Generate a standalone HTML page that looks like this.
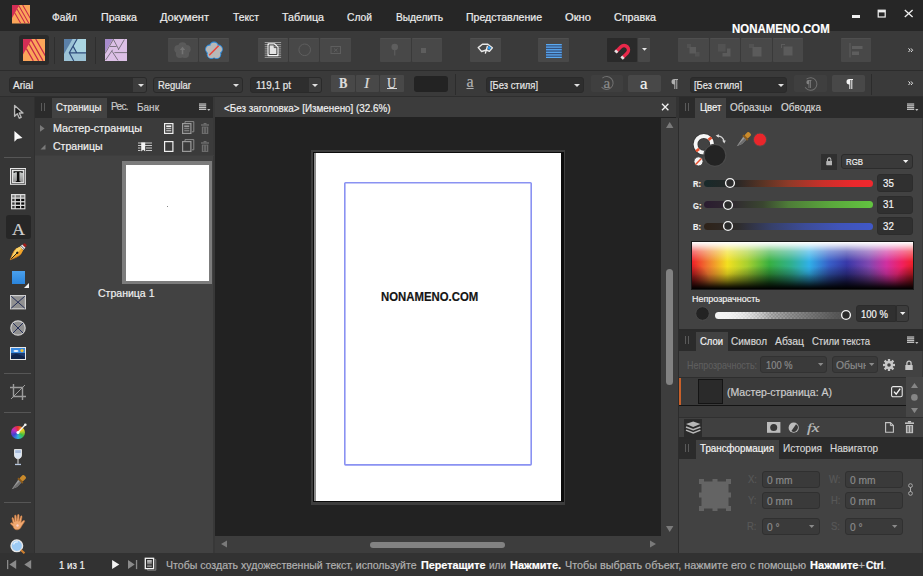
<!DOCTYPE html>
<html><head><meta charset="utf-8"><title>Affinity Publisher</title>
<style>
html,body{margin:0;padding:0;}
body{width:923px;height:576px;overflow:hidden;background:#3a3a3a;position:relative;font-family:"Liberation Sans",sans-serif;}
#r{position:absolute;left:0;top:0;width:923px;height:576px;overflow:hidden;}
#r div,#r svg{position:absolute;box-sizing:border-box;}
#r .t{white-space:nowrap;-webkit-text-stroke:0.2px;font-family:"Liberation Sans",sans-serif;}
#r .s{font-family:"Liberation Serif",serif;}
</style></head><body><div id="r">
<div style="left:0px;top:0px;width:923px;height:31px;background:#262626;"></div>
<div style="left:0px;top:31px;width:923px;height:40px;background:#3a3a3a;"></div>
<div style="left:0px;top:70px;width:923px;height:1px;background:#2c2c2c;"></div>
<div style="left:0px;top:71px;width:923px;height:26px;background:#3a3a3a;"></div>
<div style="left:0px;top:96px;width:923px;height:1px;background:#2e2e2e;"></div>
<div style="left:0px;top:97px;width:35px;height:456px;background:#363636;"></div>
<div style="left:34px;top:97px;width:1px;height:456px;background:#303030;"></div>
<div style="left:35px;top:97px;width:179px;height:456px;background:#424242;"></div>
<div style="left:35px;top:97px;width:179px;height:21px;background:#2b2b2b;"></div>
<div style="left:52px;top:98px;width:55px;height:20px;background:#424242;"></div>
<div style="left:35px;top:118px;width:179px;height:37px;background:#3b3b3b;"></div>
<div style="left:213px;top:97px;width:2px;height:456px;background:#383838;"></div>
<div style="left:215px;top:97px;width:463px;height:456px;background:#222222;"></div>
<div style="left:215px;top:97px;width:461px;height:20px;background:#3c3c3c;"></div>
<div style="left:676px;top:97px;width:3px;height:21px;background:#333333;"></div>
<div style="left:661px;top:118px;width:17px;height:418px;background:#3d3d3d;"></div>
<div style="left:215px;top:536px;width:463px;height:17px;background:#3d3d3d;"></div>
<div style="left:677.5px;top:118px;width:1.5px;height:435px;background:#2c2c2c;"></div>
<div style="left:679px;top:97px;width:244px;height:456px;background:#424242;"></div>
<div style="left:922px;top:97px;width:1px;height:456px;background:#383838;"></div>
<div style="left:0px;top:553px;width:923px;height:23px;background:#323232;"></div>
<div class="t" style="left:52px;top:9.9px;height:15px;line-height:15px;font-size:11px;color:#ececec;transform-origin:0 0;transform:scaleX(0.9245);">Файл</div>
<div class="t" style="left:101px;top:9.9px;height:15px;line-height:15px;font-size:11px;color:#ececec;transform-origin:0 0;transform:scaleX(0.9689);">Правка</div>
<div class="t" style="left:160px;top:9.9px;height:15px;line-height:15px;font-size:11px;color:#ececec;transform-origin:0 0;transform:scaleX(1.0042);">Документ</div>
<div class="t" style="left:233px;top:9.9px;height:15px;line-height:15px;font-size:11px;color:#ececec;transform-origin:0 0;transform:scaleX(0.9389);">Текст</div>
<div class="t" style="left:282px;top:9.9px;height:15px;line-height:15px;font-size:11px;color:#ececec;transform-origin:0 0;transform:scaleX(0.9738);">Таблица</div>
<div class="t" style="left:347px;top:9.9px;height:15px;line-height:15px;font-size:11px;color:#ececec;transform-origin:0 0;transform:scaleX(0.9347);">Слой</div>
<div class="t" style="left:396px;top:9.9px;height:15px;line-height:15px;font-size:11px;color:#ececec;transform-origin:0 0;transform:scaleX(0.9262);">Выделить</div>
<div class="t" style="left:466px;top:9.9px;height:15px;line-height:15px;font-size:11px;color:#ececec;transform-origin:0 0;transform:scaleX(0.9583);">Представление</div>
<div class="t" style="left:565px;top:9.9px;height:15px;line-height:15px;font-size:11px;color:#ececec;transform-origin:0 0;transform:scaleX(1.0172);">Окно</div>
<div class="t" style="left:614px;top:9.9px;height:15px;line-height:15px;font-size:11px;color:#ececec;transform-origin:0 0;transform:scaleX(0.9733);">Справка</div>
<svg style="left:11.6px;top:5px;" width="18.5" height="18.5" viewBox="0 0 22 22"><rect width="22" height="22" fill="#fba55a"/><path d="M0 0H8.75L0 15.5Z" fill="#d42e55"/><path d="M12.7 0L22.4 17M8.1 0.9L20 21.8M5.95 4.9L15.6 21.8M3.3 9.6L10.3 21.8" stroke="#c8284a" stroke-width="1.2" fill="none"/></svg>
<div style="left:852px;top:15px;width:8px;height:3.4px;background:#f0f0f0;"></div>
<svg style="left:877px;top:9.4px;" width="10" height="10" viewBox="0 0 10 10"><rect x="1.2" y="1.2" width="7" height="6.8" fill="none" stroke="#f0f0f0" stroke-width="1.2"/><rect x="1.2" y="1.2" width="7" height="2.2" fill="#f0f0f0"/></svg>
<svg style="left:904px;top:9.4px;" width="10" height="9" viewBox="0 0 10 9"><path d="M0.8 0.9L8.6 7.9M8.6 0.9L0.8 7.9" stroke="#f0f0f0" stroke-width="1.3" fill="none"/></svg>
<div style="left:19px;top:35px;width:30px;height:30px;background:#2a2a2a;border-radius:3px;"></div>
<svg style="left:23px;top:39px;" width="22" height="22" viewBox="0 0 22 22"><rect width="22" height="22" fill="#fba55a"/><path d="M0 0H8.75L0 15.5Z" fill="#d42e55"/><path d="M12.7 0L22.4 17M8.1 0.9L20 21.8M5.95 4.9L15.6 21.8M3.3 9.6L10.3 21.8" stroke="#c8284a" stroke-width="1.2" fill="none"/></svg>
<div style="left:54px;top:37px;width:1px;height:27px;background:#2e2e2e;"></div>
<div style="left:95px;top:37px;width:1px;height:27px;background:#2e2e2e;"></div>
<svg style="left:64px;top:39px;" width="22" height="22" viewBox="0 0 22 22"><rect width="22" height="22" fill="#9cc3d6"/><path d="M13.1 0H22V13.8H12.7L9.2 7.6Z" fill="#abd6e2"/><path d="M0 0H8.5L0 15Z" fill="#5b80a8"/><path d="M13.1 0L5.3 13.8L9.8 22M5.3 13.8H22M9.2 7.4L12.7 13.8" stroke="#2f4c7c" stroke-width="1.15" fill="none"/></svg>
<svg style="left:104.5px;top:39px;" width="22" height="22" viewBox="0 0 22 22"><rect width="22" height="22" fill="#dcc0e6"/><path d="M0 0H7.8L0 13.4Z" fill="#a88ccc"/><path d="M8.2 0L13.6 10.2M19.4 0.5L13.2 11M8.6 0L0 14.6M5 7.5H11.6M9.4 13.6H22M7.6 10.8L0.6 21M7 12.2L13 21.4" stroke="#77707c" stroke-width="0.95" fill="none"/></svg>
<div style="left:168px;top:38px;width:30px;height:24px;background:#484848;border-radius:1px;border-top:1px solid #4f4f4f;"></div>
<div style="left:199px;top:38px;width:30px;height:24px;background:#484848;border-radius:1px;border-top:1px solid #4f4f4f;"></div>
<div style="left:258px;top:38px;width:30px;height:24px;background:#484848;border-radius:1px;border-top:1px solid #4f4f4f;"></div>
<div style="left:289px;top:38px;width:30px;height:24px;background:#484848;border-radius:1px;border-top:1px solid #4f4f4f;"></div>
<div style="left:320px;top:38px;width:31px;height:24px;background:#484848;border-radius:1px;border-top:1px solid #4f4f4f;"></div>
<div style="left:380px;top:38px;width:31px;height:24px;background:#484848;border-radius:1px;border-top:1px solid #4f4f4f;"></div>
<div style="left:412px;top:38px;width:30px;height:24px;background:#484848;border-radius:1px;border-top:1px solid #4f4f4f;"></div>
<div style="left:470px;top:38px;width:31px;height:24px;background:#484848;border-radius:1px;border-top:1px solid #4f4f4f;"></div>
<div style="left:538px;top:38px;width:31px;height:24px;background:#484848;border-radius:1px;border-top:1px solid #4f4f4f;"></div>
<div style="left:841px;top:38px;width:30px;height:24px;background:#484848;border-radius:1px;border-top:1px solid #4f4f4f;"></div>
<div style="left:678px;top:38px;width:31px;height:24px;background:#484848;border-radius:1px;border-top:1px solid #4f4f4f;"></div>
<div style="left:710px;top:38px;width:30px;height:24px;background:#484848;border-radius:1px;border-top:1px solid #4f4f4f;"></div>
<div style="left:741px;top:38px;width:31px;height:24px;background:#484848;border-radius:1px;border-top:1px solid #4f4f4f;"></div>
<div style="left:773px;top:38px;width:30px;height:24px;background:#484848;border-radius:1px;border-top:1px solid #4f4f4f;"></div>
<div style="left:607px;top:38px;width:30px;height:24px;background:#2a2a2a;border-radius:1px;"></div>
<div style="left:638px;top:38px;width:12px;height:24px;background:#484848;border-radius:1px;border-top:1px solid #4f4f4f;"></div>
<svg style="left:642px;top:48px;" width="5" height="3" viewBox="0 0 5 3"><path d="M0 0H5L2.5 2.8Z" fill="#e8e8e8"/></svg>
<div class="t" style="left:732.4px;top:21px;height:16px;line-height:16px;font-size:13.2px;color:#ffffff;font-weight:700;transform-origin:0 0;transform:scaleX(0.8660);">NONAMENO.COM</div>
<svg style="left:908px;top:48px;" width="6" height="5" viewBox="0 0 6 5"><path d="M0.5 0.4L2.1 2.2L0.5 4M3 0.4L4.6 2.2L3 4" stroke="#e6e6e6" stroke-width="1" fill="none"/></svg>
<svg style="left:908px;top:81px;" width="6" height="5" viewBox="0 0 6 5"><path d="M0.5 0.4L2.1 2.2L0.5 4M3 0.4L4.6 2.2L3 4" stroke="#e6e6e6" stroke-width="1" fill="none"/></svg>
<svg style="left:172.3px;top:40.2px;" width="21" height="21" viewBox="0 0 21 21"><circle cx="10.50" cy="6.24" r="4.10" fill="#5a5a5a"/><circle cx="14.56" cy="9.18" r="4.10" fill="#5a5a5a"/><circle cx="13.01" cy="13.95" r="4.10" fill="#5a5a5a"/><circle cx="7.99" cy="13.95" r="4.10" fill="#5a5a5a"/><circle cx="6.44" cy="9.18" r="4.10" fill="#5a5a5a"/><circle cx="10.5" cy="10.5" r="5.08" fill="#5a5a5a"/><path d="M10.5 6.8L7.8 10H9.7V14.2H11.3V10H13.2Z" fill="#747474"/></svg>
<svg style="left:203.3px;top:40.2px;" width="22" height="22" viewBox="0 0 22 22"><circle cx="11.00" cy="6.33" r="4.20" fill="#b8b8b8" stroke="#2e8fe2" stroke-width="1.1"/><circle cx="15.15" cy="9.35" r="4.20" fill="#b8b8b8" stroke="#2e8fe2" stroke-width="1.1"/><circle cx="13.57" cy="14.23" r="4.20" fill="#b8b8b8" stroke="#2e8fe2" stroke-width="1.1"/><circle cx="8.43" cy="14.23" r="4.20" fill="#b8b8b8" stroke="#2e8fe2" stroke-width="1.1"/><circle cx="6.85" cy="9.35" r="4.20" fill="#b8b8b8" stroke="#2e8fe2" stroke-width="1.1"/><circle cx="11" cy="10.7" r="5.21" fill="#b8b8b8"/><circle cx="11.00" cy="6.33" r="3.65" fill="#b8b8b8"/><circle cx="15.15" cy="9.35" r="3.65" fill="#b8b8b8"/><circle cx="13.57" cy="14.23" r="3.65" fill="#b8b8b8"/><circle cx="8.43" cy="14.23" r="3.65" fill="#b8b8b8"/><circle cx="6.85" cy="9.35" r="3.65" fill="#b8b8b8"/><path d="M6.2 15.2L15.6 5.8" stroke="#e8453c" stroke-width="1.5"/></svg>
<svg style="left:264px;top:42px;" width="18" height="16" viewBox="0 0 18 16"><rect x="0.7" y="0.10" width="16.4" height="0.9" fill="#a6a6a6"/><rect x="0.7" y="2.21" width="16.4" height="0.9" fill="#a6a6a6"/><rect x="0.7" y="4.32" width="16.4" height="0.9" fill="#a6a6a6"/><rect x="0.7" y="6.43" width="16.4" height="0.9" fill="#a6a6a6"/><rect x="0.7" y="8.54" width="16.4" height="0.9" fill="#a6a6a6"/><rect x="0.7" y="10.65" width="16.4" height="0.9" fill="#a6a6a6"/><rect x="0.7" y="12.76" width="16.4" height="0.9" fill="#a6a6a6"/><rect x="0.7" y="14.87" width="16.4" height="0.9" fill="#a6a6a6"/><path d="M4.2 2H10.6L13.8 5.2V13.4H4.2Z" fill="#e4e4e4" stroke="#f6f6f6" stroke-width="1.5" stroke-linejoin="round"/><path d="M5.1 2.9H10.3L12.9 5.5V12.5H5.1Z" fill="#e2e2e2" stroke="#2c2c2c" stroke-width="0.9" stroke-linejoin="round"/><path d="M10.2 3V5.6H12.8" fill="none" stroke="#2c2c2c" stroke-width="0.8"/></svg>
<svg style="left:297px;top:42px;" width="16" height="16" viewBox="0 0 16 16"><circle cx="7.7" cy="7.8" r="5.8" fill="none" stroke="#5e5e5e" stroke-width="1"/></svg>
<svg style="left:330px;top:45px;" width="12" height="10" viewBox="0 0 12 10"><rect x="1" y="1.5" width="9.5" height="7" fill="none" stroke="#5e5e5e" stroke-width="1"/><path d="M4 3.5L7.5 6.8M7.5 3.5L4 6.8" stroke="#5e5e5e" stroke-width="1"/></svg>
<svg style="left:390px;top:43px;" width="10" height="13" viewBox="0 0 10 13"><circle cx="4.75" cy="4" r="3.3" fill="#5e5e5e"/><rect x="4.2" y="6.5" width="1.1" height="6" fill="#5e5e5e"/></svg>
<div style="left:421px;top:48px;width:5px;height:5px;background:#5e5e5e;"></div>
<svg style="left:477px;top:43px;" width="18" height="12" viewBox="0 0 18 12"><path d="M1.2 4.6L5.4 1.3H10.8L15.4 4.7L12.4 8.4L9.4 7L4.6 8.5Z" fill="none" stroke="#e8e8e8" stroke-width="1.4" stroke-linejoin="round"/><path d="M12.1 2.7L14.2 4.9L12 7L10.3 4.9Z" fill="#2f9af0"/><path d="M10.5 2.8L8.3 10.6" stroke="#f0f0f0" stroke-width="1.3"/></svg>
<svg style="left:546px;top:44px;" width="16" height="14.2" viewBox="0 0 16 14.2"><rect x="0" y="0.4" width="15.8" height="13.4" fill="#35507c"/><rect x="0" y="0" width="15.8" height="1.25" fill="#5aaaf2"/><rect x="0" y="2.5" width="15.8" height="1.25" fill="#5aaaf2"/><rect x="0" y="5.1" width="15.8" height="1.25" fill="#5aaaf2"/><rect x="0" y="7.7" width="15.8" height="1.25" fill="#5aaaf2"/><rect x="0" y="10.3" width="15.8" height="1.25" fill="#5aaaf2"/><rect x="0" y="12.8" width="15.8" height="1.25" fill="#5aaaf2"/></svg>
<svg style="left:613px;top:42px;" width="19" height="19" viewBox="0 0 19 19"><g transform="rotate(45 9.5 9.5)"><path d="M3.4 14.5V7.2A6.1 6.1 0 0 1 15.6 7.2V14.5H12.2V7.4A2.7 2.7 0 0 0 6.8 7.4V14.5Z" fill="#e8284a"/><rect x="3.4" y="12.6" width="3.4" height="2.6" fill="#e0e0e0"/><rect x="12.2" y="12.6" width="3.4" height="2.6" fill="#e0e0e0"/></g></svg>
<svg style="left:687px;top:44px;" width="13" height="13" viewBox="0 0 13 13"><rect x="0" y="0" width="4" height="4" fill="#5b5b5b" opacity="0.5"/><rect x="8" y="8" width="4.5" height="4.5" fill="#5b5b5b" opacity="0.5"/><rect x="2.5" y="3" width="6.5" height="6.5" fill="#5b5b5b"/></svg>
<svg style="left:718px;top:44px;" width="14" height="14" viewBox="0 0 14 14"><rect x="0" y="0" width="7.5" height="7.5" fill="#5b5b5b" opacity="0.5"/><path d="M9 4.5H12.5V12.5H4.5V9H9Z" fill="#5b5b5b"/></svg>
<svg style="left:749px;top:44px;" width="14" height="14" viewBox="0 0 14 14"><rect x="0" y="0" width="5" height="4" fill="#5b5b5b" opacity="0.5"/><rect x="3.5" y="3" width="9" height="9.5" fill="#5b5b5b"/></svg>
<svg style="left:781px;top:44px;" width="13" height="13" viewBox="0 0 13 13"><rect x="0" y="0" width="4" height="1" fill="#5b5b5b"/><rect x="0" y="0" width="1" height="4" fill="#5b5b5b"/><rect x="2.5" y="2.5" width="9" height="9" fill="#5b5b5b"/></svg>
<svg style="left:849px;top:43px;" width="16" height="15" viewBox="0 0 16 15"><rect x="0.5" y="0" width="1" height="14.5" fill="#5e5e5e"/><rect x="3" y="3" width="10.5" height="3" fill="#5e5e5e"/><rect x="3" y="8.5" width="7" height="3.5" fill="#5e5e5e"/></svg>
<div style="left:9px;top:77px;width:138px;height:16px;background:#2e2e2e;border-radius:3px;border:1px solid #2a2a2a;"></div>
<div style="left:133px;top:78px;width:13px;height:14px;background:#3c3c3c;border-radius:0 2px 2px 0;"></div>
<div class="t" style="left:13.3px;top:78.3px;height:16px;line-height:16px;font-size:10.3px;color:#e8e8e8;transform-origin:0 0;transform:scaleX(0.9804);">Arial</div>
<svg style="left:137.5px;top:83.5px;" width="6" height="3" viewBox="0 0 6 3"><path d="M0 0H6L3 3Z" fill="#e0e0e0"/></svg>
<div style="left:153px;top:77px;width:90px;height:16px;background:#373737;border-radius:3px;border:1px solid #2a2a2a;"></div>
<div class="t" style="left:158px;top:77.0px;height:16px;line-height:16px;font-size:11px;color:#e8e8e8;transform-origin:0 0;transform:scaleX(0.8567);">Regular</div>
<svg style="left:233px;top:83.5px;" width="6" height="3" viewBox="0 0 6 3"><path d="M0 0H6L3 3Z" fill="#e0e0e0"/></svg>
<div style="left:250px;top:77px;width:72px;height:16px;background:#2e2e2e;border-radius:3px;border:1px solid #2a2a2a;"></div>
<div style="left:309px;top:78px;width:12px;height:14px;background:#3c3c3c;border-radius:0 2px 2px 0;"></div>
<div class="t" style="left:256px;top:77.0px;height:16px;line-height:16px;font-size:11px;color:#e8e8e8;transform-origin:0 0;transform:scaleX(0.8989);">119,1 pt</div>
<svg style="left:312px;top:83.5px;" width="6" height="3" viewBox="0 0 6 3"><path d="M0 0H6L3 3Z" fill="#e0e0e0"/></svg>
<div style="left:331px;top:75px;width:24px;height:17px;background:#484848;border-radius:1px;"></div>
<div style="left:356px;top:75px;width:23px;height:17px;background:#484848;border-radius:1px;"></div>
<div style="left:380px;top:75px;width:24px;height:17px;background:#484848;border-radius:1px;"></div>
<div class="t s" style="left:339.4px;top:73.7px;height:18px;line-height:18px;font-size:15px;color:#dcdcdc;font-weight:700;transform-origin:0 0;transform:scaleX(0.8395);">B</div>
<div class="t s" style="left:364.2px;top:73.7px;height:18px;line-height:18px;font-size:15px;color:#dcdcdc;font-style:italic;">I</div>
<div class="t s" style="left:387.1px;top:73.7px;height:18px;line-height:18px;font-size:15px;color:#dcdcdc;transform-origin:0 0;transform:scaleX(0.8493);">U</div>
<div style="left:386.6px;top:88.3px;width:10.2px;height:1px;background:#dcdcdc;"></div>
<div style="left:413.5px;top:76px;width:34px;height:16px;background:#232323;border-radius:3px;"></div>
<div style="left:455px;top:74px;width:1px;height:21px;background:#2c2c2c;"></div>
<div class="t s" style="left:466.5px;top:73px;height:18px;line-height:18px;font-size:16px;color:#b0b0b0;text-decoration:underline;">a</div>
<div style="left:486px;top:77px;width:98px;height:16px;background:#2e2e2e;border-radius:3px;border:1px solid #2a2a2a;"></div>
<div class="t" style="left:490px;top:77.0px;height:16px;line-height:16px;font-size:11px;color:#e8e8e8;transform-origin:0 0;transform:scaleX(0.8516);">[Без стиля]</div>
<svg style="left:574px;top:83.5px;" width="6" height="3" viewBox="0 0 6 3"><path d="M0 0H6L3 3Z" fill="#e0e0e0"/></svg>
<div style="left:591px;top:75px;width:32px;height:17px;background:#3f3f3f;border-radius:2px;"></div>
<svg style="left:598px;top:75.4px;" width="18" height="16" viewBox="0 0 18 16"><circle cx="8.6" cy="8" r="6.5" fill="none" stroke="#707070" stroke-width="1" stroke-dasharray="30 10" transform="rotate(-130 8.6 8)"/></svg>
<div class="t s" style="left:603.4px;top:73.6px;height:18px;line-height:18px;font-size:15px;color:#8c8c8c;">a</div>
<div style="left:628px;top:75px;width:33px;height:17px;background:#484848;border-radius:2px;"></div>
<div class="t s" style="left:640px;top:74.5px;height:18px;line-height:18px;font-size:17px;color:#f4f4f4;">a</div>
<svg style="left:671px;top:78.6px;" width="7.0" height="10.4" viewBox="0 0 7 10.4"><path d="M3.3 0H7V1.1H6.3V10.4H5.3V1.1H4.3V10.4H3.3V5.6A2.8 2.8 0 0 1 3.3 0Z" fill="#b0b0b0"/></svg>
<div style="left:690px;top:77px;width:97px;height:16px;background:#2e2e2e;border-radius:3px;border:1px solid #2a2a2a;"></div>
<div class="t" style="left:694px;top:77.0px;height:16px;line-height:16px;font-size:11px;color:#e8e8e8;transform-origin:0 0;transform:scaleX(0.8516);">[Без стиля]</div>
<svg style="left:778px;top:83.5px;" width="6" height="3" viewBox="0 0 6 3"><path d="M0 0H6L3 3Z" fill="#e0e0e0"/></svg>
<div style="left:794px;top:75px;width:33px;height:17px;background:#3f3f3f;border-radius:2px;"></div>
<svg style="left:802px;top:76px;" width="18" height="16" viewBox="0 0 18 16"><circle cx="8.6" cy="8" r="6.3" fill="none" stroke="#707070" stroke-width="1" stroke-dasharray="30 10" transform="rotate(-130 8.6 8)"/></svg>
<svg style="left:806.3px;top:80px;" width="5.46" height="8.112" viewBox="0 0 7 10.4"><path d="M3.3 0H7V1.1H6.3V10.4H5.3V1.1H4.3V10.4H3.3V5.6A2.8 2.8 0 0 1 3.3 0Z" fill="#808080"/></svg>
<div style="left:832px;top:75px;width:33px;height:17px;background:#484848;border-radius:2px;"></div>
<svg style="left:845.5px;top:78.7px;" width="7.0" height="10.4" viewBox="0 0 7 10.4"><path d="M3.3 0H7V1.1H6.3V10.4H5.3V1.1H4.3V10.4H3.3V5.6A2.8 2.8 0 0 1 3.3 0Z" fill="#f4f4f4"/></svg>
<div style="left:871px;top:74px;width:1px;height:21px;background:#2c2c2c;"></div>
<div style="left:41px;top:103px;width:1px;height:8px;background:#5a5a5a;"></div>
<div style="left:44px;top:103px;width:1px;height:8px;background:#5a5a5a;"></div>
<div class="t" style="left:56px;top:99.2px;height:16px;line-height:16px;font-size:11px;color:#f0f0f0;transform-origin:0 0;transform:scaleX(0.8811);">Страницы</div>
<div class="t" style="left:111px;top:99.2px;height:16px;line-height:16px;font-size:10.0px;color:#c8c8c8;letter-spacing:-0.643px;">Рес.</div>
<div class="t" style="left:137px;top:99.2px;height:16px;line-height:16px;font-size:11px;color:#c8c8c8;transform-origin:0 0;transform:scaleX(0.9083);">Банк</div>
<svg style="left:198.5px;top:103px;" width="12" height="9" viewBox="0 0 12 9"><rect x="0" y="0.40" width="7.2" height="1.25" fill="#c0c0c0"/><rect x="0" y="2.18" width="7.2" height="1.25" fill="#c0c0c0"/><rect x="0" y="3.96" width="7.2" height="1.25" fill="#c0c0c0"/><rect x="0" y="5.74" width="7.2" height="1.25" fill="#c0c0c0"/><path d="M8.2 6H11.4L9.8 8Z" fill="#c0c0c0"/></svg>
<svg style="left:40px;top:125px;" width="5" height="7" viewBox="0 0 5 7"><path d="M0 0L4.6 3.4L0 6.8Z" fill="#7a7a7a"/></svg>
<svg style="left:40px;top:144px;" width="6" height="6" viewBox="0 0 6 6"><path d="M5.5 0.5V5.5H0.5Z" fill="#7a7a7a"/></svg>
<div class="t" style="left:53.4px;top:119.85px;height:16px;line-height:16px;font-size:11px;color:#f0f0f0;transform-origin:0 0;transform:scaleX(0.9790);">Мастер-страницы</div>
<div class="t" style="left:53.4px;top:137.8px;height:16px;line-height:16px;font-size:11px;color:#f0f0f0;transform-origin:0 0;transform:scaleX(0.9585);">Страницы</div>
<div style="left:35px;top:155px;width:179px;height:1px;background:#3e3e3e;"></div>
<div style="left:122px;top:161px;width:90px;height:123px;background:#7c7c7c;"></div>
<div style="left:126px;top:165px;width:82.5px;height:116px;background:#ffffff;"></div>
<div style="left:167px;top:206px;width:1px;height:1px;background:#888;"></div>
<div class="t" style="left:97.5px;top:284.9px;height:16px;line-height:16px;font-size:11px;color:#f0f0f0;transform-origin:0 0;transform:scaleX(0.9572);">Страница 1</div>
<div class="t" style="left:224px;top:100.1px;height:16px;line-height:16px;font-size:11px;color:#f0f0f0;transform-origin:0 0;transform:scaleX(0.8933);">&lt;Без заголовка&gt; [Изменено] (32.6%)</div>
<svg style="left:661px;top:103px;" width="8" height="8" viewBox="0 0 8 8"><path d="M1 0.8L7.4 7.2M7.4 0.8L1 7.2" stroke="#f0f0f0" stroke-width="1.35"/></svg>
<svg style="left:665.5px;top:122px;" width="8" height="6" viewBox="0 0 8 6"><path d="M3.7 0L7.4 6H0Z" fill="#7a7a7a"/></svg>
<svg style="left:665.5px;top:525.5px;" width="8" height="6" viewBox="0 0 8 6"><path d="M0 0H7.4L3.7 6Z" fill="#7a7a7a"/></svg>
<div style="left:666px;top:269px;width:7px;height:115.5px;background:#828282;border-radius:3.5px;"></div>
<svg style="left:220.7px;top:540.3px;" width="6" height="8" viewBox="0 0 6 8"><path d="M6 0.4V7.6L0 4Z" fill="#7a7a7a"/></svg>
<svg style="left:650px;top:540.3px;" width="6" height="8" viewBox="0 0 6 8"><path d="M0 0.4V7.6L6 4Z" fill="#7a7a7a"/></svg>
<div style="left:370px;top:541.5px;width:135px;height:6.8px;background:#828282;border-radius:3.4px;"></div>
<div style="left:661px;top:536px;width:17px;height:17px;background:#3d3d3d;"></div>
<div style="left:311.2px;top:150px;width:253.9px;height:354.6px;background:#3d3d3d;"></div>
<div style="left:312.5px;top:151.5px;width:251px;height:350.9px;background:#0c0c0c;"></div>
<div style="left:313.8px;top:153.2px;width:2.2px;height:347.5px;background:#8c8c8c;"></div>
<div style="left:315.8px;top:153.2px;width:244.9px;height:347.5px;background:#ffffff;"></div>
<svg style="left:343px;top:181px;" width="190" height="286" viewBox="0 0 190 286"><rect x="1.8" y="1.8" width="186.4" height="282.1" rx="0.8" fill="none" stroke="#8a92f2" stroke-width="1.6"/></svg>
<div class="t" style="left:381.4px;top:288.7px;height:16px;line-height:16px;font-size:13px;color:#141414;font-weight:700;transform-origin:0 0;transform:scaleX(0.8740);">NONAMENO.COM</div>
<svg style="left:7px;top:559.6px;" width="10" height="10" viewBox="0 0 10 10"><rect x="0" y="0" width="1.3" height="9.1" fill="#8a8a8a"/><path d="M9.2 0V9.1L2.4 4.55Z" fill="#8a8a8a"/></svg>
<svg style="left:24.4px;top:559.6px;" width="8" height="10" viewBox="0 0 8 10"><path d="M7.2 0V9.1L0.3 4.55Z" fill="#8a8a8a"/></svg>
<div class="t" style="left:59px;top:556.8px;height:16px;line-height:16px;font-size:11px;color:#f4f4f4;transform-origin:0 0;transform:scaleX(0.8804);">1 из 1</div>
<svg style="left:112px;top:559.6px;" width="8" height="10" viewBox="0 0 8 10"><path d="M0.1 0V9.1L7.3 4.55Z" fill="#f4f4f4"/></svg>
<svg style="left:127.9px;top:559.6px;" width="10" height="10" viewBox="0 0 10 10"><path d="M0 0V9.1L6.7 4.55Z" fill="#8a8a8a"/><rect x="7.9" y="0" width="1.3" height="9.1" fill="#8a8a8a"/></svg>
<svg style="left:144px;top:557px;" width="13" height="14" viewBox="0 0 13 14"><defs><linearGradient id="gpg" x1="0" y1="0" x2="0" y2="1"><stop offset="0" stop-color="#d0d0d0"/><stop offset="1" stop-color="#6a6a6a"/></linearGradient></defs><path d="M3.5 12.2V13.2H11.8V2.6H10.6" fill="none" stroke="#7e7e7e" stroke-width="1"/><rect x="1.3" y="1.3" width="8.3" height="10.3" fill="#2a2a2a" stroke="#f4f4f4" stroke-width="1.3"/><rect x="3.1" y="3.1" width="4.7" height="4.4" fill="url(#gpg)"/><rect x="3.1" y="8.6" width="4.7" height="1" fill="#c8c8c8"/></svg>
<div class="t" style="left:165.5px;top:556.8px;height:16px;line-height:16px;font-size:11px;color:#b0b0b0;transform-origin:0 0;transform:scaleX(0.9600);">Чтобы создать художественный текст, используйте</div>
<div class="t" style="left:421px;top:556.8px;height:16px;line-height:16px;font-size:11px;color:#ffffff;font-weight:700;transform-origin:0 0;transform:scaleX(0.9808);">Перетащите</div>
<div class="t" style="left:489px;top:556.8px;height:16px;line-height:16px;font-size:11px;color:#b0b0b0;transform-origin:0 0;transform:scaleX(0.9088);">или</div>
<div class="t" style="left:510px;top:556.8px;height:16px;line-height:16px;font-size:11px;color:#ffffff;font-weight:700;transform-origin:0 0;transform:scaleX(0.9946);">Нажмите</div>
<div class="t" style="left:558px;top:556.8px;height:16px;line-height:16px;font-size:11px;color:#ffffff;font-weight:700;">.</div>
<div class="t" style="left:564.5px;top:556.8px;height:16px;line-height:16px;font-size:11px;color:#b0b0b0;transform-origin:0 0;transform:scaleX(0.9831);">Чтобы выбрать объект, нажмите его с помощью</div>
<div class="t" style="left:809.5px;top:556.8px;height:16px;line-height:16px;font-size:11px;color:#ffffff;font-weight:700;transform-origin:0 0;transform:scaleX(1.0049);">Нажмите</div>
<div class="t" style="left:858.3px;top:556.8px;height:16px;line-height:16px;font-size:11px;color:#b0b0b0;transform-origin:0 0;transform:scaleX(1.0895);">+</div>
<div class="t" style="left:865.5px;top:556.8px;height:16px;line-height:16px;font-size:11px;color:#ffffff;font-weight:700;transform-origin:0 0;transform:scaleX(0.9238);">Ctrl</div>
<div class="t" style="left:883.3px;top:556.8px;height:16px;line-height:16px;font-size:11px;color:#b0b0b0;">.</div>
<div style="left:679px;top:97px;width:244px;height:21px;background:#2b2b2b;"></div>
<div style="left:695px;top:98px;width:31px;height:20px;background:#424242;"></div>
<div style="left:685px;top:103px;width:1px;height:8px;background:#5a5a5a;"></div>
<div style="left:688px;top:103px;width:1px;height:8px;background:#5a5a5a;"></div>
<div class="t" style="left:699.8px;top:99.2px;height:16px;line-height:16px;font-size:11px;color:#f4f4f4;transform-origin:0 0;transform:scaleX(0.8723);">Цвет</div>
<div class="t" style="left:730px;top:99.2px;height:16px;line-height:16px;font-size:11px;color:#d4d4d4;transform-origin:0 0;transform:scaleX(0.9088);">Образцы</div>
<div class="t" style="left:781px;top:99.2px;height:16px;line-height:16px;font-size:11px;color:#d4d4d4;transform-origin:0 0;transform:scaleX(0.9082);">Обводка</div>
<svg style="left:906.5px;top:103px;" width="12" height="9" viewBox="0 0 12 9"><rect x="0" y="0.40" width="7.2" height="1.25" fill="#c0c0c0"/><rect x="0" y="2.18" width="7.2" height="1.25" fill="#c0c0c0"/><rect x="0" y="3.96" width="7.2" height="1.25" fill="#c0c0c0"/><rect x="0" y="5.74" width="7.2" height="1.25" fill="#c0c0c0"/><path d="M8.2 6H11.4L9.8 8Z" fill="#c0c0c0"/></svg>
<svg style="left:690px;top:131px;" width="40" height="40" viewBox="0 0 40 40"><circle cx="13.8" cy="13.3" r="8.3" fill="none" stroke="#383838" stroke-width="5.6"/><circle cx="13.8" cy="13.3" r="8.3" fill="none" stroke="#f6f6f6" stroke-width="3.9"/><path d="M19.2 6.6L20.8 8.7" stroke="#e8502e" stroke-width="3.9" fill="none"/><path d="M6.8 18L8.4 20.1" stroke="#e8502e" stroke-width="3.9" fill="none"/><circle cx="24.9" cy="24.4" r="11" fill="#232323" stroke="#4a4a4a" stroke-width="1.2"/><circle cx="8.5" cy="30.4" r="4.6" fill="#f4f4f4" stroke="#3a3a3a" stroke-width="1"/><path d="M5.6 33.4L11.4 27.4" stroke="#e8502e" stroke-width="1.5"/><path d="M27.2 5.2C30.5 4.6 33.6 7 34 10.6" fill="none" stroke="#d4d4d4" stroke-width="1.2"/><path d="M25.6 4.4L29 3.2L28.8 6.8Z" fill="#d4d4d4"/><path d="M32.2 9.6L35.8 9.4L34.3 12.6Z" fill="#d4d4d4"/></svg>
<svg style="left:735.3px;top:131.2px;" width="17" height="17" viewBox="0 0 16 16"><g transform="rotate(45 8 8)"><rect x="5.8" y="-0.5" width="4.4" height="5.5" rx="1.2" fill="#c98a2b"/><rect x="4.8" y="4.6" width="6.4" height="1.8" fill="#8a5a1c"/><path d="M6 6.4H10V12L8 17Z" fill="#9a9a9a"/><path d="M8 6.4H10V12L8 17Z" fill="#6e6e6e"/></g></svg>
<svg style="left:752px;top:132px;" width="16" height="16" viewBox="0 0 16 16"><circle cx="8" cy="7.6" r="6.6" fill="#e9262b" stroke="#4a4a4a" stroke-width="1"/></svg>
<div style="left:821px;top:154px;width:16px;height:16px;background:#303030;"></div>
<svg style="left:826px;top:157.4px;" width="6.4" height="8.48" viewBox="0 0 8 10.6"><path d="M1.9 5.4V3.2A2.1 2.1 0 0 1 6.1 3.2V5.4" fill="none" stroke="#b4b4b4" stroke-width="1.3"/><rect x="0.3" y="5" width="7.4" height="5.4" rx="0.6" fill="#b4b4b4"/></svg>
<div style="left:841px;top:154px;width:72px;height:15px;background:#3a3a3a;border-radius:3px;border:1px solid #2c2c2c;"></div>
<div class="t" style="left:845.5px;top:153.8px;height:16px;line-height:16px;font-size:9.5px;color:#f0f0f0;transform-origin:0 0;transform:scaleX(0.8258);">RGB</div>
<svg style="left:902.8px;top:160.3px;" width="6" height="3" viewBox="0 0 6 3"><path d="M0 0H5.4L2.7 3Z" fill="#f0f0f0"/></svg>
<div class="t" style="left:692.5px;top:176px;height:16px;line-height:16px;font-size:9px;color:#f0f0f0;font-weight:700;transform-origin:0 0;transform:scaleX(0.8400);">R:</div>
<div style="left:704px;top:179.5px;width:169px;height:7px;background:linear-gradient(90deg,#17292a,#2a2725 20%,#5a3424 35%,#8e3a28 50%,#c8302a 70%,#ea282c 88%,#f0282e);border-radius:3.5px;"></div>
<svg style="left:724.3px;top:177px;" width="12" height="12" viewBox="0 0 12 12"><circle cx="6" cy="6" r="4.4" fill="#2a2a2a" stroke="#f0f0f0" stroke-width="1.4"/></svg>
<div style="left:877px;top:174px;width:36px;height:18px;background:#303030;border-radius:3px;border:1px solid #2c2c2c;"></div>
<div class="t" style="left:882.6px;top:174.8px;height:16px;line-height:16px;font-size:11px;color:#f4f4f4;transform-origin:0 0;transform:scaleX(0.8828);">35</div>
<div class="t" style="left:692.5px;top:197.5px;height:16px;line-height:16px;font-size:9px;color:#f0f0f0;font-weight:700;transform-origin:0 0;transform:scaleX(0.8400);">G:</div>
<div style="left:704px;top:201.0px;width:169px;height:7px;background:linear-gradient(90deg,#2a1c30,#302a30 17%,#3a4630 35%,#4e7c38 50%,#5aa83c 75%,#62c440);border-radius:3.5px;"></div>
<svg style="left:721.5px;top:198.5px;" width="12" height="12" viewBox="0 0 12 12"><circle cx="6" cy="6" r="4.4" fill="#2a2a2a" stroke="#f0f0f0" stroke-width="1.4"/></svg>
<div style="left:877px;top:195.5px;width:36px;height:18px;background:#303030;border-radius:3px;border:1px solid #2c2c2c;"></div>
<div class="t" style="left:882.6px;top:196.3px;height:16px;line-height:16px;font-size:11px;color:#f4f4f4;transform-origin:0 0;transform:scaleX(0.8828);">31</div>
<div class="t" style="left:692.5px;top:219px;height:16px;line-height:16px;font-size:9px;color:#f0f0f0;font-weight:700;transform-origin:0 0;transform:scaleX(0.8400);">B:</div>
<div style="left:704px;top:222.5px;width:169px;height:7px;background:linear-gradient(90deg,#2e2218,#2e2c2c 20%,#36406a 40%,#3c4c98 60%,#4054b8 80%,#4058c8);border-radius:3.5px;"></div>
<svg style="left:722.3px;top:220px;" width="12" height="12" viewBox="0 0 12 12"><circle cx="6" cy="6" r="4.4" fill="#2a2a2a" stroke="#f0f0f0" stroke-width="1.4"/></svg>
<div style="left:877px;top:217px;width:36px;height:18px;background:#303030;border-radius:3px;border:1px solid #2c2c2c;"></div>
<div class="t" style="left:882.6px;top:217.8px;height:16px;line-height:16px;font-size:11px;color:#f4f4f4;transform-origin:0 0;transform:scaleX(0.8828);">32</div>
<div style="left:691px;top:241px;width:223px;height:49px;background:#1a1a1a;"></div>
<div style="left:692px;top:242px;width:221px;height:47px;background:linear-gradient(90deg,#f02028 0%,#f07830 7%,#f2e020 16%,#a8d030 25%,#38b040 35%,#30b090 45%,#30b0e8 53%,#3860c8 62%,#3838a8 70%,#8048b0 80%,#d030a0 88%,#f02060 95%,#f02028 100%);"></div>
<div style="left:692px;top:242px;width:221px;height:47px;background:radial-gradient(ellipse 22% 40% at 35% 88%,rgba(0,0,0,0.35),rgba(0,0,0,0) 100%),radial-gradient(ellipse 22% 42% at 69% 88%,rgba(0,0,0,0.4),rgba(0,0,0,0) 100%),radial-gradient(ellipse 8% 40% at 0% 85%,rgba(0,0,0,0.4),rgba(0,0,0,0) 100%),radial-gradient(ellipse 8% 40% at 100% 85%,rgba(0,0,0,0.4),rgba(0,0,0,0) 100%);"></div>
<div style="left:692px;top:242px;width:221px;height:47px;background:linear-gradient(180deg,#fff 0%,rgba(255,255,255,0.82) 7%,rgba(255,255,255,0.38) 20%,rgba(255,255,255,0) 42%,rgba(0,0,0,0) 52%,rgba(0,0,0,0.16) 68%,rgba(0,0,0,0.48) 82%,rgba(0,0,0,0.85) 94%,#000 100%);"></div>
<div class="t" style="left:692px;top:291.2px;height:16px;line-height:16px;font-size:9.6px;color:#f0f0f0;transform-origin:0 0;transform:scaleX(0.9348);">Непрозрачность</div>
<svg style="left:695px;top:306.4px;" width="16" height="16" viewBox="0 0 16 16"><circle cx="7.5" cy="7.5" r="6.8" fill="#232323" stroke="#4a4a4a" stroke-width="1"/></svg>
<div style="left:715px;top:311.5px;width:136px;height:7px;background:#3a3a3a;border-radius:3.5px;overflow:hidden;background:linear-gradient(90deg,#f4f4f4 0%,rgba(244,244,244,0.92) 10%,rgba(244,244,244,0) 42%),linear-gradient(90deg,rgba(70,70,70,0) 0%,rgba(70,70,70,0.12) 20%,rgba(70,70,70,0.55) 55%,rgba(70,70,70,0.88) 88%,rgba(70,70,70,0.95) 100%),repeating-conic-gradient(#c0c0c0 0 25%,#f0f0f0 0 50%) 0 0/3.5px 3.5px;"></div>
<svg style="left:840px;top:308.7px;" width="12" height="12" viewBox="0 0 12 12"><circle cx="6" cy="6" r="4.4" fill="#2a2a2a" stroke="#f0f0f0" stroke-width="1.4"/></svg>
<div style="left:856px;top:305px;width:40px;height:17px;background:#303030;border-radius:3px 0 0 3px;border:1px solid #2c2c2c;"></div>
<div class="t" style="left:861.3px;top:305.6px;height:16px;line-height:16px;font-size:11px;color:#f4f4f4;transform-origin:0 0;transform:scaleX(0.8625);">100 %</div>
<div style="left:896px;top:305px;width:13px;height:17px;background:#3c3c3c;border-radius:0 3px 3px 0;border:1px solid #2c2c2c;"></div>
<svg style="left:900.3px;top:312.3px;" width="6" height="3" viewBox="0 0 6 3"><path d="M0 0H5.4L2.7 3Z" fill="#f0f0f0"/></svg>
<div style="left:679px;top:329px;width:244px;height:2px;background:#2a2a2a;"></div>
<div style="left:679px;top:331px;width:244px;height:20px;background:#2b2b2b;"></div>
<div style="left:696px;top:332px;width:32px;height:19px;background:#424242;"></div>
<div style="left:685px;top:336px;width:1px;height:8px;background:#5a5a5a;"></div>
<div style="left:688px;top:336px;width:1px;height:8px;background:#5a5a5a;"></div>
<div class="t" style="left:699.5px;top:333px;height:16px;line-height:16px;font-size:11px;color:#f4f4f4;transform-origin:0 0;transform:scaleX(0.8599);">Слои</div>
<div class="t" style="left:731px;top:333px;height:16px;line-height:16px;font-size:11px;color:#d4d4d4;transform-origin:0 0;transform:scaleX(0.9076);">Символ</div>
<div class="t" style="left:775px;top:333px;height:16px;line-height:16px;font-size:11px;color:#d4d4d4;transform-origin:0 0;transform:scaleX(0.9398);">Абзац</div>
<div class="t" style="left:812px;top:333px;height:16px;line-height:16px;font-size:11px;color:#d4d4d4;transform-origin:0 0;transform:scaleX(0.8625);">Стили текста</div>
<svg style="left:906.5px;top:336px;" width="12" height="9" viewBox="0 0 12 9"><rect x="0" y="0.40" width="7.2" height="1.25" fill="#c0c0c0"/><rect x="0" y="2.18" width="7.2" height="1.25" fill="#c0c0c0"/><rect x="0" y="3.96" width="7.2" height="1.25" fill="#c0c0c0"/><rect x="0" y="5.74" width="7.2" height="1.25" fill="#c0c0c0"/><path d="M8.2 6H11.4L9.8 8Z" fill="#c0c0c0"/></svg>
<div class="t" style="left:686.5px;top:356.5px;height:16px;line-height:16px;font-size:11px;color:#5e5e5e;transform-origin:0 0;transform:scaleX(0.8101);">Непрозрачность:</div>
<div style="left:760px;top:356px;width:67px;height:17px;background:#3a3a3a;border-radius:3px;border:1px solid #323232;"></div>
<div class="t" style="left:765.5px;top:356.5px;height:16px;line-height:16px;font-size:11px;color:#8a8a8a;transform-origin:0 0;transform:scaleX(0.8497);">100 %</div>
<svg style="left:817.8px;top:363.3px;" width="6" height="3" viewBox="0 0 6 3"><path d="M0 0H5.4L2.7 3Z" fill="#8a8a8a"/></svg>
<div style="left:832px;top:356px;width:46px;height:17px;background:#3a3a3a;border-radius:3px;border:1px solid #323232;"></div>
<div style="left:836px;top:356px;width:29.6px;height:17px;overflow:hidden">
<div class="t" style="left:0px;top:0.5px;height:16px;line-height:16px;font-size:11.5px;color:#8a8a8a;transform-origin:0 0;transform:scaleX(0.9050);">Обычный</div>
</div>
<svg style="left:868.8px;top:363.3px;" width="6" height="3" viewBox="0 0 6 3"><path d="M0 0H5.4L2.7 3Z" fill="#8a8a8a"/></svg>
<svg style="left:883px;top:359px;" width="12" height="12" viewBox="0 0 11.4 11.4"><rect x="4.6" y="-0.2" width="2.2" height="3" fill="#c8c8c8" transform="rotate(0 5.7 5.7)"/><rect x="4.6" y="-0.2" width="2.2" height="3" fill="#c8c8c8" transform="rotate(45 5.7 5.7)"/><rect x="4.6" y="-0.2" width="2.2" height="3" fill="#c8c8c8" transform="rotate(90 5.7 5.7)"/><rect x="4.6" y="-0.2" width="2.2" height="3" fill="#c8c8c8" transform="rotate(135 5.7 5.7)"/><rect x="4.6" y="-0.2" width="2.2" height="3" fill="#c8c8c8" transform="rotate(180 5.7 5.7)"/><rect x="4.6" y="-0.2" width="2.2" height="3" fill="#c8c8c8" transform="rotate(225 5.7 5.7)"/><rect x="4.6" y="-0.2" width="2.2" height="3" fill="#c8c8c8" transform="rotate(270 5.7 5.7)"/><rect x="4.6" y="-0.2" width="2.2" height="3" fill="#c8c8c8" transform="rotate(315 5.7 5.7)"/><circle cx="5.7" cy="5.7" r="4" fill="#c8c8c8"/><circle cx="5.7" cy="5.7" r="1.7" fill="#424242"/></svg>
<svg style="left:904.5px;top:359.5px;" width="8.0" height="10.6" viewBox="0 0 8 10.6"><path d="M1.9 5.4V3.2A2.1 2.1 0 0 1 6.1 3.2V5.4" fill="none" stroke="#c8c8c8" stroke-width="1.3"/><rect x="0.3" y="5" width="7.4" height="5.4" rx="0.6" fill="#c8c8c8"/></svg>
<div style="left:679px;top:377px;width:227px;height:29px;background:#3a3a3a;border-top:1px solid #2e2e2e;border-bottom:1px solid #141414;"></div>
<div style="left:679px;top:378px;width:2px;height:27px;background:#c8602a;"></div>
<div style="left:698px;top:379px;width:25px;height:25px;background:#2a2a2a;border:1px solid #141414;"></div>
<div class="t" style="left:727px;top:384px;height:16px;line-height:16px;font-size:11px;color:#cccccc;transform-origin:0 0;transform:scaleX(0.9554);">(Мастер-страница: A)</div>
<svg style="left:891px;top:386px;" width="12" height="12" viewBox="0 0 12 12"><rect x="0.6" y="0.6" width="10.6" height="10.2" rx="1.5" fill="none" stroke="#e8e8e8" stroke-width="1.1"/><path d="M3 5.6L5.2 8.2L9.2 2.6" fill="none" stroke="#f4f4f4" stroke-width="1.4"/></svg>
<div style="left:679px;top:406px;width:227px;height:11px;background:#3b3b3b;"></div>
<div style="left:906px;top:377px;width:17px;height:40px;background:#474747;"></div>
<svg style="left:911.3px;top:383.2px;" width="7" height="5" viewBox="0 0 7 5"><path d="M3.5 0L7 5H0Z" fill="#868686"/></svg>
<svg style="left:911.2px;top:394.2px;" width="7" height="7" viewBox="0 0 7 7"><circle cx="3.4" cy="3.4" r="3.3" fill="#868686"/></svg>
<svg style="left:911.3px;top:407.6px;" width="7" height="5.4" viewBox="0 0 7 5.4"><path d="M0 0H7L3.5 5.2Z" fill="#868686"/></svg>
<div style="left:679px;top:417px;width:244px;height:1px;background:#303030;"></div>
<div style="left:679px;top:418px;width:244px;height:19.5px;background:#404040;"></div>
<div style="left:684px;top:418.5px;width:18px;height:18px;background:#2b2b2b;"></div>
<svg style="left:684.5px;top:421px;" width="17" height="13" viewBox="0 0 17 13"><path d="M1 3.1L8.2 0.5L15.4 3.1L8.2 5.9Z" fill="#b8b8b8"/><path d="M1 6L8.2 8.8L15.4 6M1 9.1L8.2 11.9L15.4 9.1" fill="none" stroke="#b8b8b8" stroke-width="1.5"/></svg>
<svg style="left:767px;top:422px;" width="14" height="11" viewBox="0 0 14 11"><rect width="13.4" height="10.8" fill="#bcbcbc"/><circle cx="6.7" cy="5.4" r="3.5" fill="#383838"/></svg>
<svg style="left:787.5px;top:421.8px;" width="12" height="12" viewBox="0 0 12 12"><circle cx="5.7" cy="5.7" r="5.1" fill="#bcbcbc"/><path d="M5.7 1.6A4.1 4.1 0 0 1 5.7 9.8Z" fill="#383838" transform="rotate(35 5.7 5.7)"/></svg>
<div class="t s" style="left:807.3px;top:419px;height:18px;line-height:18px;font-size:12.5px;color:#bcbcbc;font-style:italic;transform-origin:0 0;transform:scaleX(1.3856);">fx</div>
<svg style="left:884.5px;top:422.4px;" width="9" height="11" viewBox="0 0 9 11"><path d="M0.6 0.6H5.4L8.4 3.6V10.2H0.6Z" fill="none" stroke="#c4c4c4" stroke-width="1.1"/><path d="M5.4 0.6V3.6H8.4" fill="none" stroke="#c4c4c4" stroke-width="1"/></svg>
<svg style="left:904.6px;top:421.2px;" width="9" height="12.4" viewBox="0 0 9 12.4"><rect x="2.9" y="0" width="3.2" height="1.6" fill="#c0c0c0"/><rect x="0" y="1.4" width="9" height="1.6" fill="#c0c0c0"/><path d="M0.9 4H8.1V12.2H0.9Z" fill="#c0c0c0"/><path d="M3.05 5V11.2M5.95 5V11.2" stroke="#404040" stroke-width="0.95"/></svg>
<div style="left:679px;top:437px;width:244px;height:2px;background:#2a2a2a;"></div>
<div style="left:679px;top:439px;width:244px;height:20px;background:#2b2b2b;"></div>
<div style="left:696px;top:440px;width:83px;height:19px;background:#424242;"></div>
<div style="left:685px;top:444px;width:1px;height:8px;background:#5a5a5a;"></div>
<div style="left:688px;top:444px;width:1px;height:8px;background:#5a5a5a;"></div>
<div class="t" style="left:699.5px;top:440.2px;height:16px;line-height:16px;font-size:11px;color:#f4f4f4;transform-origin:0 0;transform:scaleX(0.8886);">Трансформация</div>
<div class="t" style="left:782.5px;top:440.2px;height:16px;line-height:16px;font-size:11px;color:#d4d4d4;transform-origin:0 0;transform:scaleX(0.9143);">История</div>
<div class="t" style="left:830px;top:440.2px;height:16px;line-height:16px;font-size:11px;color:#d4d4d4;transform-origin:0 0;transform:scaleX(0.9084);">Навигатор</div>
<svg style="left:699px;top:479px;" width="32" height="32" viewBox="0 0 32 32"><rect x="2.5" y="2.5" width="27" height="27" fill="#646464"/><rect x="0" y="0" width="5" height="5" fill="#646464"/><rect x="0" y="13.5" width="5" height="5" fill="#646464"/><rect x="0" y="27" width="5" height="5" fill="#646464"/><rect x="13.5" y="0" width="5" height="5" fill="#646464"/><rect x="13.5" y="27" width="5" height="5" fill="#646464"/><rect x="27" y="0" width="5" height="5" fill="#646464"/><rect x="27" y="13.5" width="5" height="5" fill="#646464"/><rect x="27" y="27" width="5" height="5" fill="#646464"/></svg>
<div class="t" style="left:747.9712265625px;top:471.3px;height:16px;line-height:16px;font-size:10.5px;color:#585858;transform-origin:0 0;transform:scaleX(0.9000);">X:</div>
<div style="left:762px;top:471px;width:58px;height:17px;background:#3a3a3a;border-radius:3px;border:1px solid #303030;"></div>
<div class="t" style="left:766.5px;top:471.5px;height:16px;line-height:16px;font-size:11.5px;color:#8a8a8a;transform-origin:0 0;transform:scaleX(0.8900);">0 mm</div>
<div class="t" style="left:748.492453125px;top:492.3px;height:16px;line-height:16px;font-size:10.5px;color:#585858;transform-origin:0 0;transform:scaleX(0.9000);">Y:</div>
<div style="left:762px;top:492px;width:58px;height:17px;background:#3a3a3a;border-radius:3px;border:1px solid #303030;"></div>
<div class="t" style="left:766.5px;top:492.5px;height:16px;line-height:16px;font-size:11.5px;color:#8a8a8a;transform-origin:0 0;transform:scaleX(0.8900);">0 mm</div>
<div class="t" style="left:747.4499999999999px;top:518.3px;height:16px;line-height:16px;font-size:10.5px;color:#585858;transform-origin:0 0;transform:scaleX(0.9000);">R:</div>
<div style="left:762px;top:518px;width:58px;height:17px;background:#3a3a3a;border-radius:3px;border:1px solid #303030;"></div>
<div class="t" style="left:766.5px;top:518.5px;height:16px;line-height:16px;font-size:11.5px;color:#8a8a8a;transform-origin:0 0;transform:scaleX(0.8900);">0 °</div>
<svg style="left:808.5px;top:525.3px;" width="6" height="3" viewBox="0 0 6 3"><path d="M0 0H5.4L2.7 3Z" fill="#8a8a8a"/></svg>
<div class="t" style="left:828.8260390625001px;top:471.3px;height:16px;line-height:16px;font-size:10.5px;color:#585858;transform-origin:0 0;transform:scaleX(0.9000);">W:</div>
<div style="left:845px;top:471px;width:58px;height:17px;background:#3a3a3a;border-radius:3px;border:1px solid #303030;"></div>
<div class="t" style="left:849.5px;top:471.5px;height:16px;line-height:16px;font-size:11.5px;color:#8a8a8a;transform-origin:0 0;transform:scaleX(0.8900);">0 mm</div>
<div class="t" style="left:830.75px;top:492.3px;height:16px;line-height:16px;font-size:10.5px;color:#585858;transform-origin:0 0;transform:scaleX(0.9000);">H:</div>
<div style="left:845px;top:492px;width:58px;height:17px;background:#3a3a3a;border-radius:3px;border:1px solid #303030;"></div>
<div class="t" style="left:849.5px;top:492.5px;height:16px;line-height:16px;font-size:11.5px;color:#8a8a8a;transform-origin:0 0;transform:scaleX(0.8900);">0 mm</div>
<div class="t" style="left:831.2712265625px;top:518.3px;height:16px;line-height:16px;font-size:10.5px;color:#585858;transform-origin:0 0;transform:scaleX(0.9000);">S:</div>
<div style="left:845px;top:518px;width:58px;height:17px;background:#3a3a3a;border-radius:3px;border:1px solid #303030;"></div>
<div class="t" style="left:849.5px;top:518.5px;height:16px;line-height:16px;font-size:11.5px;color:#8a8a8a;transform-origin:0 0;transform:scaleX(0.8900);">0 °</div>
<svg style="left:891.5px;top:525.3px;" width="6" height="3" viewBox="0 0 6 3"><path d="M0 0H5.4L2.7 3Z" fill="#8a8a8a"/></svg>
<svg style="left:908px;top:483px;" width="5" height="14" viewBox="0 0 5 14"><circle cx="2.5" cy="2.6" r="1.9" fill="none" stroke="#a8a8a8" stroke-width="1"/><circle cx="2.5" cy="10.4" r="1.9" fill="none" stroke="#a8a8a8" stroke-width="1"/><rect x="2" y="4" width="1" height="5" fill="#a8a8a8"/></svg>
<div style="left:4px;top:157px;width:27px;height:1px;background:#565656;"></div>
<div style="left:4px;top:373px;width:27px;height:1px;background:#565656;"></div>
<div style="left:4px;top:412px;width:27px;height:1px;background:#565656;"></div>
<div style="left:4px;top:502px;width:27px;height:1px;background:#565656;"></div>
<svg style="left:13px;top:104px;" width="12" height="16" viewBox="0 0 12 16"><path d="M1.6 1.4V12.2L4.3 9.8L6.3 14.2L8.2 13.3L6.2 9H10Z" fill="#1c1c1c" stroke="#b8b8b8" stroke-width="1.35" stroke-linejoin="round"/></svg>
<svg style="left:14px;top:131.4px;" width="10" height="12" viewBox="0 0 10 12"><path d="M0.4 0.1V10.7L3.1 8L8.5 7Z" fill="#fafafa"/></svg>
<svg style="left:10px;top:168px;" width="16" height="17" viewBox="0 0 16 17"><defs><linearGradient id="gft" x1="0" y1="0" x2="0" y2="1"><stop offset="0" stop-color="#d4d8d6"/><stop offset="1" stop-color="#8e8e8e"/></linearGradient></defs><rect x="0.5" y="0.5" width="15.2" height="15.8" fill="#585858" stroke="#e6e6e6" stroke-width="1"/><rect x="2.4" y="2.4" width="11.4" height="12" fill="url(#gft)" stroke="#f2f2f2" stroke-width="0.9"/><path d="M3.6 3.2H12.7V5H12C11.8 4.5 11.4 4.3 9.4 4.3V12.6C9.4 13.2 9.8 13.4 10.6 13.5V14H5.7V13.5C6.5 13.4 6.9 13.2 6.9 12.6V4.3C4.9 4.3 4.5 4.5 4.3 5H3.6Z" fill="#0c0c0c"/></svg>
<svg style="left:11px;top:194px;" width="15" height="16" viewBox="0 0 15 16"><rect x="0" y="0" width="14.4" height="15.3" fill="#dcdcdc"/><rect x="1.2" y="1.2" width="2.4" height="2.3" fill="#7c7c7c"/><rect x="4.8" y="1.2" width="4.2" height="2.3" fill="#7c7c7c"/><rect x="10.2" y="1.2" width="3.1" height="2.3" fill="#7c7c7c"/><rect x="1.2" y="4.8" width="2.4" height="2.3" fill="#3c3c3c"/><rect x="4.8" y="4.8" width="4.2" height="2.3" fill="#0a0a0a"/><rect x="10.2" y="4.8" width="3.1" height="2.3" fill="#0a0a0a"/><rect x="1.2" y="8.4" width="2.4" height="2.3" fill="#3c3c3c"/><rect x="4.8" y="8.4" width="4.2" height="2.3" fill="#0a0a0a"/><rect x="10.2" y="8.4" width="3.1" height="2.3" fill="#0a0a0a"/><rect x="1.2" y="12" width="2.4" height="2.2" fill="#3c3c3c"/><rect x="4.8" y="12" width="4.2" height="2.2" fill="#0a0a0a"/><rect x="10.2" y="12" width="3.1" height="2.2" fill="#0a0a0a"/></svg>
<div style="left:5.5px;top:215px;width:25px;height:23.5px;background:#262626;border-radius:3px;"></div>
<div class="t s" style="left:11.5px;top:218.5px;height:20px;line-height:20px;font-size:17.5px;color:#d0d0d0;transform-origin:0 0;transform:scaleX(1.0207);">A</div>
<svg style="left:8px;top:241.5px;" width="20" height="20" viewBox="0 0 20 20"><g transform="translate(10 10) rotate(45)"><rect x="-1.7" y="-11" width="3.4" height="3" rx="0.8" fill="#a01c1c"/><rect x="-2.3" y="-8.2" width="4.6" height="3.2" fill="#e8e8e8"/><rect x="-2.3" y="-6.9" width="4.6" height="0.8" fill="#6a6a6a"/><path d="M-2.4 -5H2.4L3.7 -0.8C3.7 3.5 1.5 7.5 0 11C-1.5 7.5 -3.7 3.5 -3.7 -0.8Z" fill="#f2a52a"/><path d="M-2.4 -5H0V11C-1.5 7.5 -3.7 3.5 -3.7 -0.8Z" fill="#fbd46a"/><path d="M-3.7 -0.8C-3.7 3.5 -1.5 7.5 0 11C1.5 7.5 3.7 3.5 3.7 -0.8" fill="none" stroke="#c8741c" stroke-width="0.7"/><path d="M0 1V9.5" stroke="#1a1a1a" stroke-width="0.9"/><circle cx="0" cy="1" r="1.15" fill="#1a1a1a"/></g></svg>
<div style="left:12px;top:271px;width:12.5px;height:12.5px;background:linear-gradient(180deg,#4aa0ec,#2a84dc);"></div>
<svg style="left:24px;top:283px;" width="5" height="5" viewBox="0 0 5 5"><path d="M5 0V5H0Z" fill="#f0f0f0"/></svg>
<svg style="left:10px;top:295px;" width="16" height="15" viewBox="0 0 16 15"><rect x="0.6" y="0.6" width="14.8" height="13.2" fill="#909090" stroke="#d0d0d0" stroke-width="1.2"/><path d="M1.2 1.2L14.8 13.2M14.8 1.2L1.2 13.2" stroke="#26305a" stroke-width="1"/></svg>
<svg style="left:10px;top:319.5px;" width="16" height="16" viewBox="0 0 16 16"><circle cx="8" cy="8" r="7.2" fill="#909090" stroke="#d0d0d0" stroke-width="1.2"/><path d="M3 3L13 13M13 3L3 13" stroke="#26305a" stroke-width="1"/></svg>
<svg style="left:10px;top:346.5px;" width="16" height="13" viewBox="0 0 16 13"><rect x="0.5" y="0.5" width="15" height="12" fill="#3a8ae0" stroke="#e8e8e8" stroke-width="1"/><rect x="1" y="6" width="14" height="6" fill="#1c3a70"/><path d="M1 9L6 6.5L15 10V12H1Z" fill="#10244c"/><circle cx="12" cy="3.6" r="1.6" fill="#f4c030"/><ellipse cx="6" cy="4" rx="2.6" ry="1.1" fill="#f0f4ff"/></svg>
<svg style="left:10px;top:384px;" width="16" height="16" viewBox="0 0 16 16"><path d="M3.5 0V12.5H16M0 3.5H12.5V16" fill="none" stroke="#9c9c9c" stroke-width="1.4"/><path d="M1 15L15 1" stroke="#9c9c9c" stroke-width="1"/></svg>
<div style="left:11.2px;top:425.7px;width:13.6px;height:13.6px;background:conic-gradient(#e83030,#f0d020,#40c040,#30b0e0,#4040d0,#c030c0,#e83030);border-radius:50%;"></div>
<svg style="left:10px;top:423px;" width="18" height="18" viewBox="0 0 18 18"><path d="M8 9.5L15 2" stroke="#f4f4f4" stroke-width="1.3"/><circle cx="8" cy="9.5" r="1.6" fill="#fff"/><circle cx="15.3" cy="1.8" r="1.3" fill="#f4f4f4"/></svg>
<svg style="left:13px;top:449px;" width="10" height="17" viewBox="0 0 10 17"><path d="M1.5 0.5H8.5V6C8.5 8.5 6.8 9.8 5 9.8C3.2 9.8 1.5 8.5 1.5 6Z" fill="#d8e4f4" stroke="#f4f4f4" stroke-width="0.8"/><path d="M2.2 1.2H7.8V4H2.2Z" fill="#a8bcdc"/><rect x="4.5" y="9.8" width="1" height="5" fill="#e0e0e0"/><rect x="2" y="14.8" width="6" height="1.3" fill="#b8c8e0"/></svg>
<svg style="left:9.6px;top:474.2px;" width="17" height="17" viewBox="0 0 16 16"><g transform="rotate(45 8 8)"><rect x="5.8" y="-0.5" width="4.4" height="5.5" rx="1.2" fill="#c98a2b"/><rect x="4.8" y="4.6" width="6.4" height="1.8" fill="#8a5a1c"/><path d="M6 6.4H10V12L8 17Z" fill="#9a9a9a"/><path d="M8 6.4H10V12L8 17Z" fill="#6e6e6e"/></g></svg>
<svg style="left:10px;top:514px;" width="16" height="17" viewBox="0 0 16 17"><path d="M3.2 9.5L2 4.5C1.8 3.6 3 3.2 3.4 4.2L4.8 7.8L4.6 1.8C4.6 0.8 6 0.8 6.1 1.8L6.8 7.2L7.6 1C7.8 0 9.2 0.2 9.1 1.2L8.9 7.4L10.6 2.4C11 1.4 12.3 1.9 12 2.9L10.9 8.6L13.4 6.6C14.2 6 15.2 6.9 14.5 7.7L11.5 12.2C10.6 14.6 9 15.8 7 15.8C4.6 15.8 3.4 14 3 12L0.8 10.2C0 9.4 1 8.4 1.8 8.8Z" fill="#f0a870" stroke="#c87840" stroke-width="0.6"/><circle cx="7.5" cy="11.5" r="1.2" fill="#f8d0c8"/></svg>
<svg style="left:10px;top:539.4px;" width="16" height="14.6" viewBox="0 0 16 14.6"><circle cx="6.8" cy="6.8" r="5.8" fill="#9ccaf4" stroke="#e8e8e8" stroke-width="1.4"/><path d="M3.5 5.5A3.8 3.8 0 0 1 8 3" fill="none" stroke="#e0f0ff" stroke-width="1.2"/><path d="M11 11L14.5 14.3" stroke="#d08030" stroke-width="2"/></svg>
<svg style="left:164px;top:123px;" width="10" height="11" viewBox="0 0 10 11"><rect x="0.6" y="0.6" width="8.3" height="9.8" fill="none" stroke="#f0f0f0" stroke-width="1.2"/><rect x="2.2" y="2.4" width="5.1" height="1.8" fill="#f0f0f0"/><rect x="2.2" y="5" width="5.1" height="1" fill="#f0f0f0" opacity="0.7"/><rect x="2.2" y="6.8" width="5.1" height="1.6" fill="#f0f0f0" opacity="0.7"/></svg>
<svg style="left:182px;top:121px;" width="13" height="13" viewBox="0 0 13 13"><path d="M3 2V0.6H11.8V10.8H10" fill="none" stroke="#8a8a8a" stroke-width="1"/><g transform="translate(0 2)"><rect x="0.6" y="0.6" width="8.3" height="9.8" fill="none" stroke="#9a9a9a" stroke-width="1.2"/><rect x="2.2" y="2.4" width="5.1" height="1.8" fill="#9a9a9a"/><rect x="2.2" y="5" width="5.1" height="1" fill="#9a9a9a" opacity="0.7"/><rect x="2.2" y="6.8" width="5.1" height="1.6" fill="#9a9a9a" opacity="0.7"/></g></svg>
<svg style="left:200.8px;top:122.8px;" width="8.1" height="11.16" viewBox="0 0 9 12.4"><rect x="2.9" y="0" width="3.2" height="1.6" fill="#6e6e6e"/><rect x="0" y="1.4" width="9" height="1.6" fill="#6e6e6e"/><path d="M0.9 4H8.1V12.2H0.9Z" fill="#6e6e6e"/><path d="M3.05 5V11.2M5.95 5V11.2" stroke="#3b3b3b" stroke-width="0.95"/></svg>
<svg style="left:164px;top:141px;" width="10" height="11" viewBox="0 0 10 11"><rect x="0.6" y="0.6" width="8.3" height="9.8" fill="none" stroke="#f0f0f0" stroke-width="1.2"/></svg>
<svg style="left:182px;top:139px;" width="13" height="13" viewBox="0 0 13 13"><path d="M3 2V0.6H11.8V10.8H10" fill="none" stroke="#8a8a8a" stroke-width="1"/><g transform="translate(0 2)"><rect x="0.6" y="0.6" width="8.3" height="9.8" fill="none" stroke="#9a9a9a" stroke-width="1.2"/></g></svg>
<svg style="left:200.8px;top:140.8px;" width="8.1" height="11.16" viewBox="0 0 9 12.4"><rect x="2.9" y="0" width="3.2" height="1.6" fill="#6e6e6e"/><rect x="0" y="1.4" width="9" height="1.6" fill="#6e6e6e"/><path d="M0.9 4H8.1V12.2H0.9Z" fill="#6e6e6e"/><path d="M3.05 5V11.2M5.95 5V11.2" stroke="#3b3b3b" stroke-width="0.95"/></svg>
<svg style="left:138px;top:142px;" width="14" height="10" viewBox="0 0 14 10"><path d="M0 1H14M0 3.5H14M8 6H14M8 8.5H14M0 6H2.5M0 8.5H2.5" stroke="#c8c8c8" stroke-width="1"/><path d="M3.2 0.5H7.2V9.5L5.2 7.8L3.2 9.5Z" fill="#f4f4f4"/></svg>
</div></body></html>
